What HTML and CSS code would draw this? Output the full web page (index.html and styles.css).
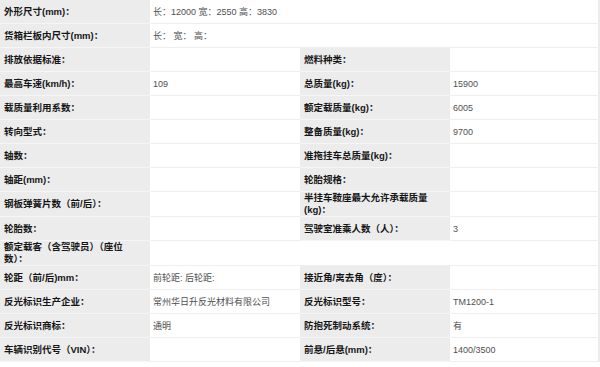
FILE: index.html
```html
<!DOCTYPE html>
<html lang="zh-CN">
<head>
<meta charset="utf-8">
<title>车辆参数</title>
<link rel="stylesheet" href="styles.css">
</head>
<body>
<table class="spec">
  <colgroup><col class="c1"><col class="c2"><col class="c3"><col class="c4"></colgroup>
  <tr><td class="k">外形尺寸(mm)：</td><td class="v" colspan="3">长：12000 宽：2550 高：3830</td></tr>
  <tr><td class="k">货箱栏板内尺寸(mm)：</td><td class="v" colspan="3">长： 宽： 高：</td></tr>
  <tr><td class="k">排放依据标准：</td><td class="v"></td><td class="k">燃料种类：</td><td class="v last"></td></tr>
  <tr><td class="k">最高车速(km/h)：</td><td class="v">109</td><td class="k">总质量(kg)：</td><td class="v last">15900</td></tr>
  <tr><td class="k">载质量利用系数：</td><td class="v"></td><td class="k">额定载质量(kg)：</td><td class="v last">6005</td></tr>
  <tr><td class="k">转向型式：</td><td class="v"></td><td class="k">整备质量(kg)：</td><td class="v last">9700</td></tr>
  <tr><td class="k">轴数：</td><td class="v"></td><td class="k">准拖挂车总质量(kg)：</td><td class="v last"></td></tr>
  <tr><td class="k">轴距(mm)：</td><td class="v"></td><td class="k">轮胎规格：</td><td class="v last"></td></tr>
  <tr><td class="k">钢板弹簧片数（前/后）：</td><td class="v"></td><td class="k">半挂车鞍座最大允许承载质量(kg)：</td><td class="v last"></td></tr>
  <tr><td class="k">轮胎数：</td><td class="v"></td><td class="k">驾驶室准乘人数（人）：</td><td class="v last">3</td></tr>
  <tr><td class="k">额定载客（含驾驶员）（座位数）：</td><td class="v"></td><td class="v last" colspan="2"></td></tr>
  <tr><td class="k">轮距（前/后)mm：</td><td class="v">前轮距: 后轮距:</td><td class="k">接近角/离去角（度）：</td><td class="v last"></td></tr>
  <tr><td class="k">反光标识生产企业：</td><td class="v">常州华日升反光材料有限公司</td><td class="k">反光标识型号：</td><td class="v last">TM1200-1</td></tr>
  <tr><td class="k">反光标识商标：</td><td class="v">通明</td><td class="k">防抱死制动系统：</td><td class="v last">有</td></tr>
  <tr><td class="k">车辆识别代号（VIN）：</td><td class="v"></td><td class="k">前悬/后悬(mm)：</td><td class="v last">1400/3500</td></tr>
</table>
</body>
</html>
```

FILE: styles.css
```css
html, body {
  margin: 0;
  padding: 0;
  background: #ffffff;
}

.spec {
  width: 600px;
  border-collapse: separate;
  border-spacing: 0;
  table-layout: fixed;
  font-family: "Liberation Sans", "Noto Sans CJK SC", sans-serif;
  font-size: 9px;
  line-height: 12px;
}

.c1, .c2, .c3, .c4 { width: 150px; }

.spec td {
  box-sizing: border-box;
  height: 24px;
  padding: 0 14px 0 4px;
  vertical-align: middle;
  text-align: left;
}

.k {
  background: #ececec;
  color: #161616;
  font-weight: bold;
  font-size: 9.5px;
  border-bottom: 1px solid #f6f6f6;
}

.v {
  background: #ffffff;
  color: #505050;
  border-bottom: 1px solid #eeeeee;
}

.spec td.v {
  padding-left: 3px;
}

.last, .spec td[colspan="3"] {
  border-right: 2px solid #ececec;
}
```
